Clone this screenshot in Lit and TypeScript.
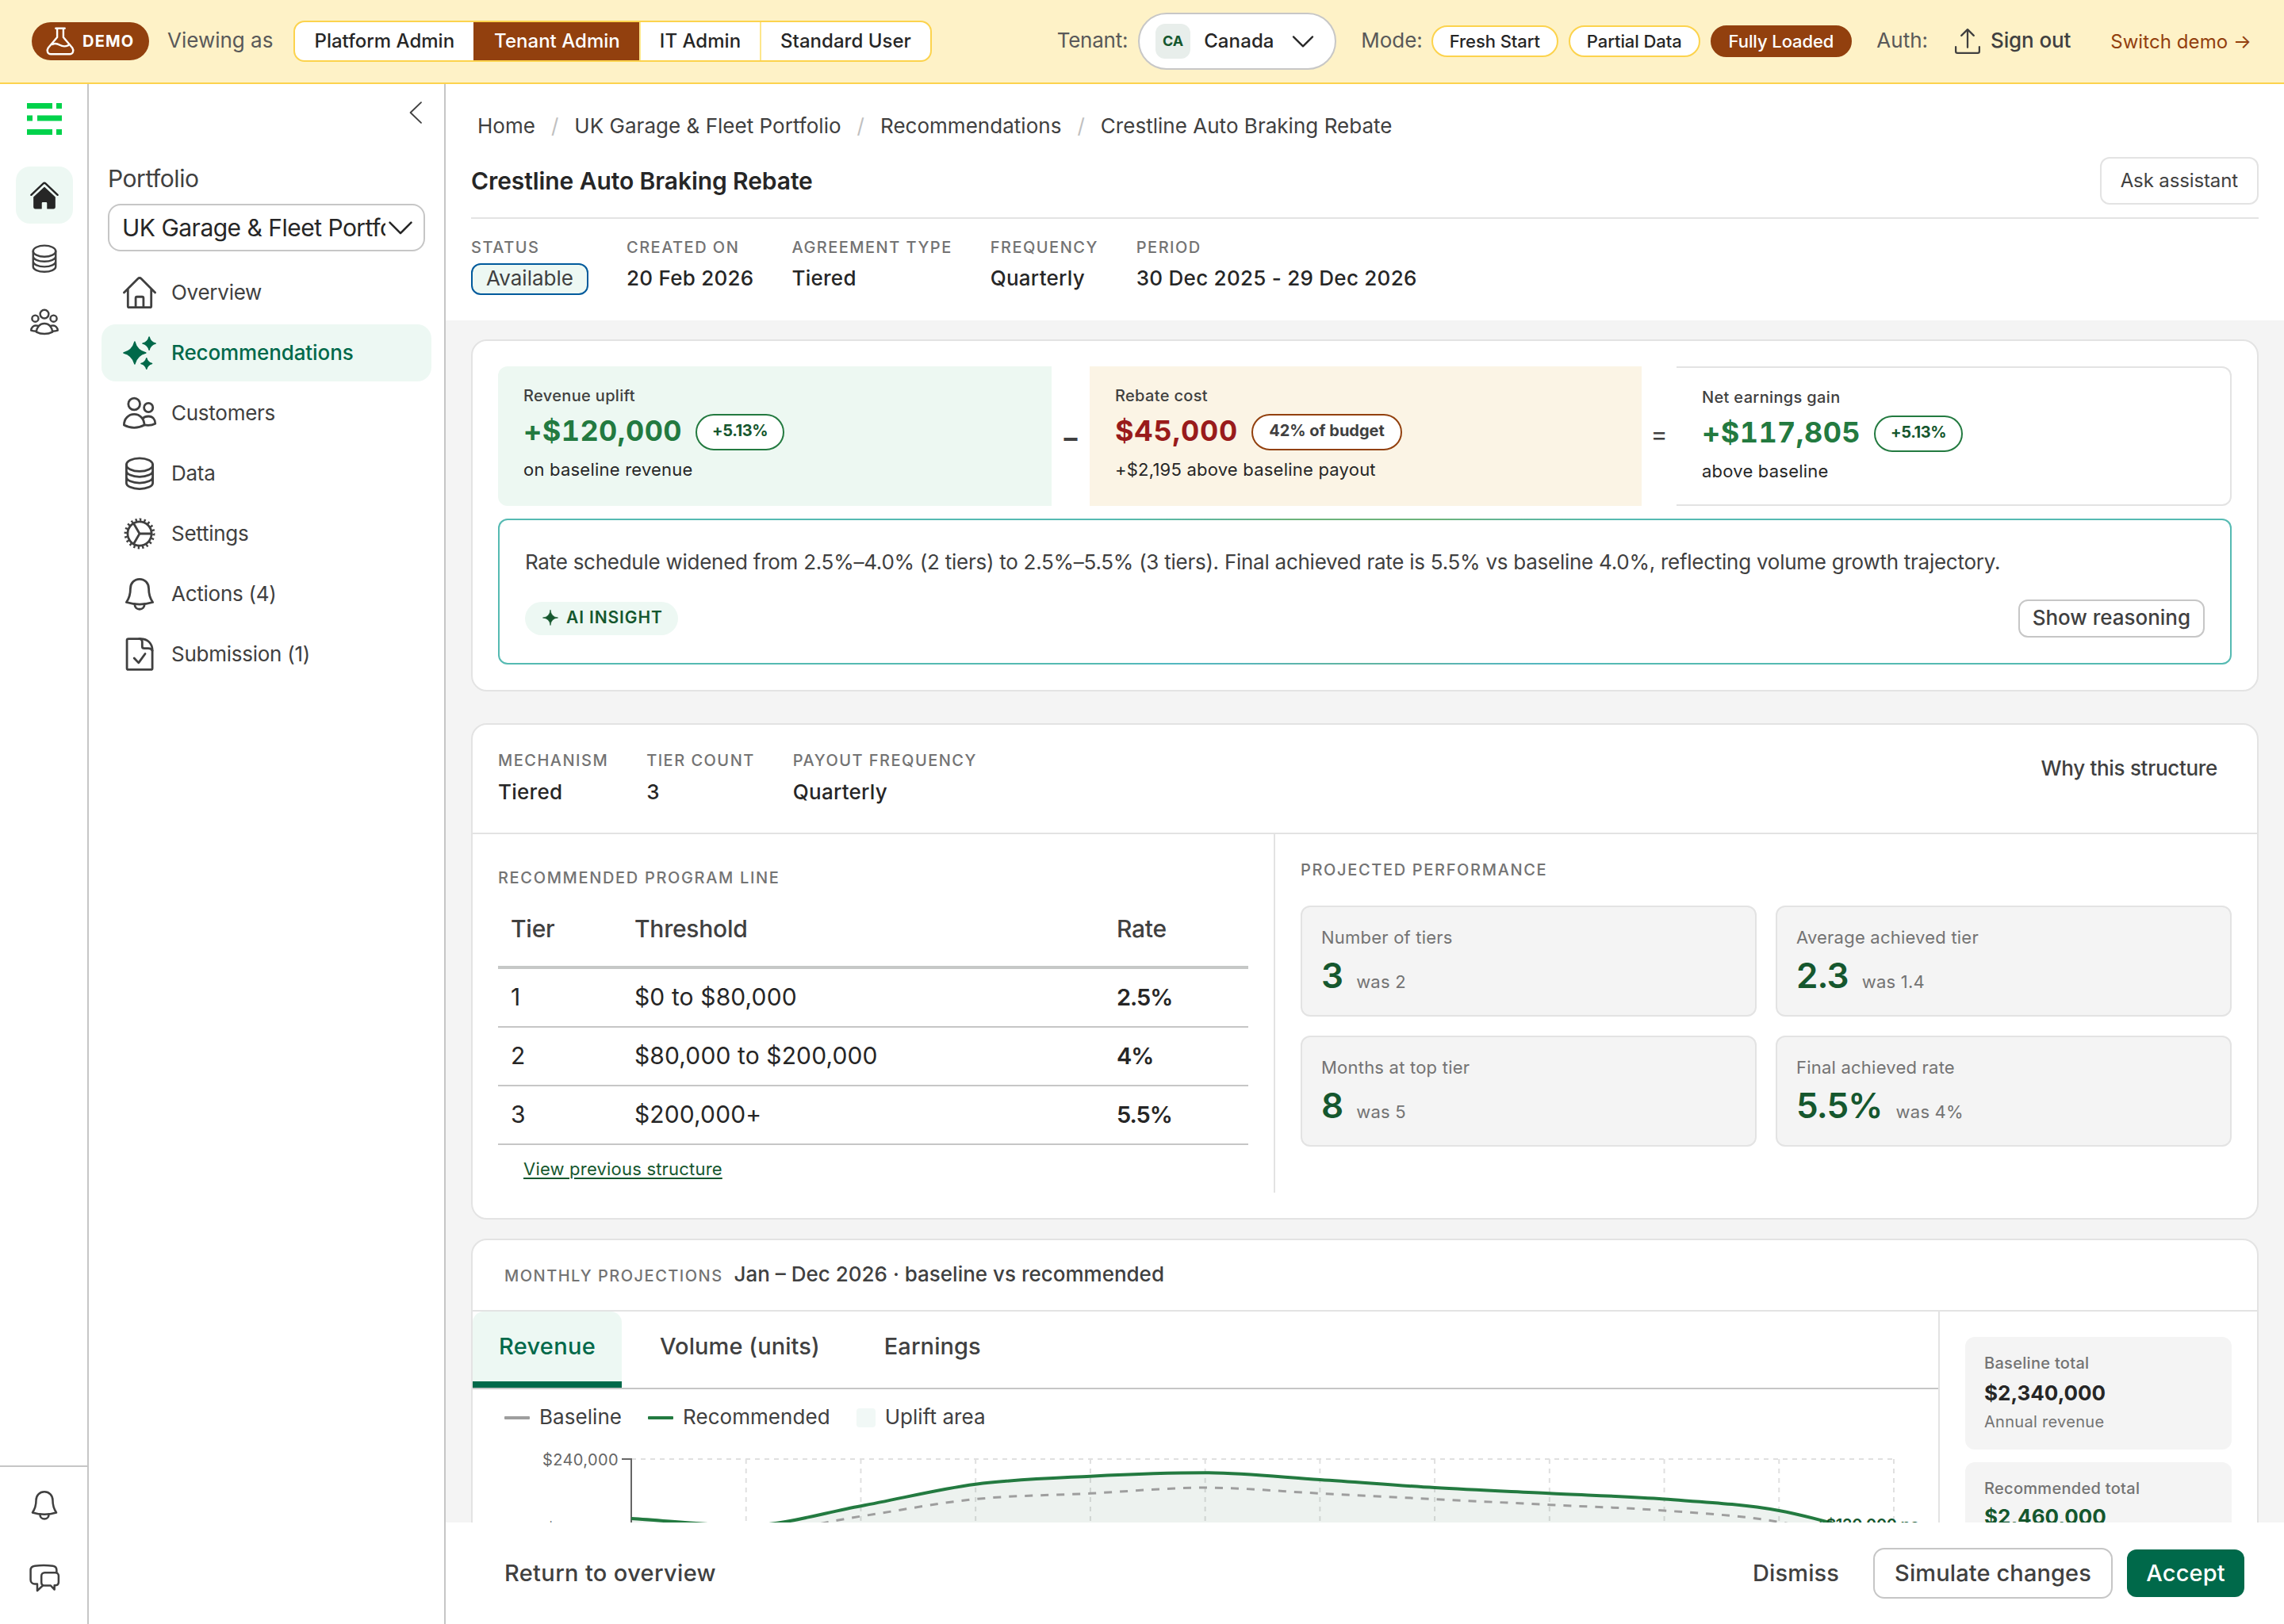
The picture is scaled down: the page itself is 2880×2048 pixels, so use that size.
import {LitElement, html, svg, css} from 'lit';
import {customElement, property, state} from 'lit/decorators.js';
import {classMap} from 'lit/directives/class-map.js';

const star = (cx: number, cy: number, r: number, waist = 0.2) => {
  const k = r * waist;
  return `M${cx} ${cy - r}Q${cx + k} ${cy - k} ${cx + r} ${cy}Q${cx + k} ${cy + k} ${cx} ${cy + r}Q${cx - k} ${cy + k} ${cx - r} ${cy}Q${cx - k} ${cy - k} ${cx} ${cy - r}z`;
};

// All icons are drawn on a 24x24 grid
const icons: Record<string, unknown> = {
  flask: svg`<path d="M8.2 1.2h7.6M9.4 1.4v7.2L1.9 17.5c-1.6 2.4-.6 5.3 2.2 5.3h15.8c2.8 0 3.8-2.9 2.2-5.3L14.6 8.6V1.4"/><path d="M5.4 14.6c2.6-1.4 4.2-.6 6.2.6 2.4 1.4 4.4 1.6 7.2.2"/>`,
  upload: svg`<path d="M12 17.5V1.5M6.5 7 12 1.5 17.5 7M1.5 17v4A1.5 1.5 0 0 0 3 22.5h18a1.5 1.5 0 0 0 1.5-1.5v-4"/>`,
  home: svg`<path d="M.8 12 10.9 1.9a1.5 1.5 0 0 1 2.2 0L23.2 12M3.6 9.5v12.3c0 .4.3.8.8.8h15.2c.5 0 .8-.4.8-.8V9.5"/><path d="M9.2 22.4V16c0-.6.4-1 1-1h3.6c.6 0 1 .4 1 1v6.4"/>`,
  homeSolid: svg`<path d="M.9 11.9 10.9 2.4a1.6 1.6 0 0 1 2.2 0l10 9.5"/><path class="fill" d="M12 5.6 3.2 13.8v8.3c0 .7.5 1.2 1.2 1.2h5v-4.5c0-.7.5-1.2 1.2-1.2h2.8c.7 0 1.2.5 1.2 1.2v4.5h5c.7 0 1.2-.5 1.2-1.2v-8.3z"/>`,
  sparkles: svg`<path class="fill" d="${star(8.5, 12, 8)}${star(18.9, 5.2, 4.7)}${star(17, 19.7, 3.9)}"/>`,
  sparkle: svg`<path class="fill" d="${star(12, 12, 11.5, 0.08)}"/>`,
  people: svg`<circle cx="8.1" cy="5.4" r="4.2"/><circle cx="18.4" cy="8" r="3.2"/><path d="M.8 20.6C.8 16 4 12.8 8.1 12.8s7.3 3.2 7.3 7.8c-4.4 2.5-10.2 2.5-14.6 0z"/><path d="M14.2 15.9c1-1 2.5-1.6 4.2-1.6 3 0 4.9 2.2 4.9 5.3-2.4 1.2-5.2 1.4-7.9.9"/>`,
  group: svg`<circle cx="12" cy="5.4" r="3.6"/><circle cx="4.3" cy="9.1" r="2.7"/><circle cx="19.7" cy="9.1" r="2.7"/><path d="M5.2 20.4c.4-4.4 3.2-7.1 6.8-7.1s6.4 2.7 6.8 7.1c-4 2.1-9.6 2.1-13.6 0z"/><path d="M5.2 19.8c-1.7 0-3.1-.1-4.4-.7.1-2.6 2-4.2 4.3-4.1.9 0 1.5.2 2 .4M18.8 19.8c1.7 0 3.1-.1 4.4-.7-.1-2.6-2-4.2-4.3-4.1-.9 0-1.5.2-2 .4"/>`,
  data: svg`<ellipse cx="12" cy="5.8" rx="9.5" ry="4.7"/><path d="M2.5 5.8v13c0 2.4 4.2 4.4 9.5 4.4s9.5-2 9.5-4.4v-13M2.5 10.1c0 2.4 4.2 4.4 9.5 4.4s9.5-2 9.5-4.4M2.5 14.5c0 2.4 4.2 4.4 9.5 4.4s9.5-2 9.5-4.4"/>`,
  gear: svg`<circle cx="12" cy="12" r="8.6"/><circle class="teeth" cx="12" cy="12" r="10.1" pathLength="20"/><path d="M12 12h8.6M12 12 7.7 4.6M12 12l-4.3 7.4"/>`,
  bell: svg`<path d="M12 1.4c-3.9 0-6.6 2.9-6.6 6.7 0 4.3-.6 6.6-2.9 9.9 5.9 1.8 13.1 1.8 19 0-2.3-3.3-2.9-5.6-2.9-9.9 0-3.8-2.7-6.7-6.6-6.7z"/><path d="M8.5 19.3v.2c0 2 1.5 3.5 3.5 3.5s3.5-1.5 3.5-3.5v-.2"/>`,
  doc: svg`<path d="M4 .9h8.8c5 0 8.4 3.4 8.4 8.3v12.9c0 .6-.5 1-1 1H3.9c-.6 0-1-.4-1-1V1.9c0-.6.4-1 1.1-1z"/><path d="M11.8.9c1.5 0 2.1.9 2.1 2.3v3.2c0 .8.6 1.4 1.4 1.4h2.9c1.6 0 2.6.5 3 1.6M8.1 14.9l3.2 3.3 4.7-6.5"/>`,
  chat: svg`<path d="M21.7 7.5V5.7c0-1.9-1.2-3.2-3-3.4-5-.5-9.6-.5-14.3 0C2.3 2.5 1 3.9 1 5.8v7.6c0 1.9 1.4 3.3 3.3 3.4h2v5.3l4.5-4.2"/><path d="M12.2 7.8h8.6c1.4 0 2.5 1.1 2.5 2.5v5c0 1.4-1 2.4-2.4 2.5H20v3.4l-3-3.2h-4.8c-1.6 0-2.6-1.1-2.6-2.6v-5c0-1.5 1.1-2.6 2.6-2.6z"/>`,
  down: svg`<path d="M3.5 8 12 16.5 20.5 8"/>`,
  left: svg`<path d="M18 1 6.5 12 18 23"/>`,
};

@customElement('ui-icon')
export class UiIcon extends LitElement {
  static styles = css`
    :host {
      display: block;
      flex: none;
      width: 42px;
      height: 42px;
    }

    svg {
      display: block;
      width: 100%;
      height: 100%;
      overflow: visible;
      fill: none;
      stroke: currentColor;
      stroke-width: 1.6;
      stroke-linecap: round;
      stroke-linejoin: round;
    }

    .fill {
      fill: currentColor;
      stroke-width: 0.8;
    }

    .teeth {
      stroke-width: 2;
      stroke-linecap: butt;
      stroke-dasharray: 0.42 0.58;
    }
  `;

  @property() name = 'home';

  render() {
    return html`<svg viewBox="0 0 24 24">${icons[this.name]}</svg>`;
  }
}

const LEFT = 200;
const RIGHT = 1792;
const TOP = 20;
const PX_PER_K = 1.4433;
const MAX = 240;

type Point = [number, number];

// Monotone cubic interpolation, so the line never overshoots its points
function curve(points: Point[]) {
  const n = points.length;
  const slope = (i: number) =>
    (points[i + 1][1] - points[i][1]) / (points[i + 1][0] - points[i][0]);
  const tangents = points.map((_, i) => {
    if (i === 0) return slope(0);
    if (i === n - 1) return slope(n - 2);
    const a = slope(i - 1);
    const b = slope(i);
    if (a * b <= 0) return 0;
    return Math.sign(a) * Math.min(Math.abs(a), Math.abs(b), Math.abs(a + b) / 4) * 2;
  });
  let d = `M${points[0][0]},${points[0][1]}`;
  for (let i = 1; i < n; i++) {
    const [x0, y0] = points[i - 1];
    const [x1, y1] = points[i];
    const h = (x1 - x0) / 3;
    d += `C${x0 + h},${y0 + tangents[i - 1] * h},${x1 - h},${y1 - tangents[i] * h},${x1},${y1}`;
  }
  return d;
}

@customElement('projection-chart')
export class ProjectionChart extends LitElement {
  static styles = css`
    :host {
      display: block;
    }

    svg {
      display: block;
      width: 1848px;
      height: 420px;
    }

    .grid {
      stroke: #e0e0e0;
      stroke-width: 2;
      stroke-dasharray: 6 6;
    }

    .axis {
      stroke: #666;
      stroke-width: 2;
    }

    .tick {
      fill: #666;
      font-size: 20px;
      letter-spacing: 0.02em;
      text-anchor: end;
    }

    .area {
      fill: #15572e;
      opacity: 0.08;
    }

    .recommended,
    .baseline {
      fill: none;
      stroke: #237a40;
      stroke-width: 4;
    }

    .baseline {
      stroke: #9e9e9e;
      stroke-width: 3;
      stroke-dasharray: 10 10;
    }

    .uplift {
      fill: #15572e;
      font-size: 20px;
      font-weight: 600;
      letter-spacing: -0.015em;
      text-anchor: end;
    }
  `;

  @property({type: Array}) baseline: number[] = [];
  @property({type: Array}) recommended: number[] = [];

  private y(value: number) {
    return TOP + (MAX - value) * PX_PER_K;
  }

  private points(values: number[]): Point[] {
    const step = (RIGHT - LEFT) / (values.length - 1);
    return values.map((value, i) => [LEFT + i * step, this.y(value)]);
  }

  render() {
    const recommended = curve(this.points(this.recommended));
    const bottom = this.y(0);
    return html`<svg viewBox="0 0 1848 420">
      ${[240, 180, 120, 60, 0].map(
        (v) => svg`
          <line class="grid" x1=${LEFT} x2=${RIGHT} y1=${this.y(v)} y2=${this.y(v)} />
          <line class="axis" x1=${LEFT - 12} x2=${LEFT} y1=${this.y(v)} y2=${this.y(v)} />
          <text class="tick" x=${LEFT - 16} y=${this.y(v) + 8}>$${v ? `${v},000` : 0}</text>`
      )}
      ${this.points(this.recommended).map(
        ([x]) => svg`<line class="grid" x1=${x} x2=${x} y1=${TOP} y2=${bottom} />`
      )}
      <line class="axis" x1=${LEFT} x2=${LEFT} y1=${TOP - 1} y2=${bottom} />
      <path class="area" d="${recommended}V${bottom}H${LEFT}Z" />
      <path class="baseline" d=${curve(this.points(this.baseline))} />
      <path class="recommended" d=${recommended} />
      <text class="uplift" x="1824" y="109.5">+$120,000 pa</text>
    </svg>`;
  }
}

const roles = ['Platform Admin', 'Tenant Admin', 'IT Admin', 'Standard User'];
const modes = ['Fresh Start', 'Partial Data', 'Fully Loaded'];
const crumbs = ['Home', 'UK Garage & Fleet Portfolio', 'Recommendations', 'Crestline Auto Braking Rebate'];
const nav = [
  {icon: 'home', label: 'Overview'},
  {icon: 'sparkles', label: 'Recommendations'},
  {icon: 'people', label: 'Customers'},
  {icon: 'data', label: 'Data'},
  {icon: 'gear', label: 'Settings'},
  {icon: 'bell', label: 'Actions (4)'},
  {icon: 'doc', label: 'Submission (1)'},
];
const meta = [
  ['Created on', '20 Feb 2026'],
  ['Agreement type', 'Tiered'],
  ['Frequency', 'Quarterly'],
  ['Period', '30 Dec 2025 - 29 Dec 2026'],
];
const structure = [
  ['Mechanism', 'Tiered'],
  ['Tier count', '3'],
  ['Payout frequency', 'Quarterly'],
];
const tiers = [
  ['1', '$0 to $80,000', '2.5%'],
  ['2', '$80,000 to $200,000', '4%'],
  ['3', '$200,000+', '5.5%'],
];
const performance = [
  ['Number of tiers', '3', 'was 2'],
  ['Average achieved tier', '2.3', 'was 1.4'],
  ['Months at top tier', '8', 'was 5'],
  ['Final achieved rate', '5.5%', 'was 4%'],
];
const tabs = ['Revenue', 'Volume (units)', 'Earnings'];
const baseline = [180, 175, 190, 205, 210, 215, 210, 205, 200, 195, 185, 160];
const recommended = [188, 182, 199, 218, 225, 228, 222, 215, 210, 205, 195, 169];

@customElement('app-root')
export class AppRoot extends LitElement {
  static styles = css`
    :host {
      display: block;
      width: 2880px;
      height: 2048px;
      overflow: hidden;
      background: #fff;
      color: #404040;
      font: 400 26px/32px Inter, sans-serif;
    }

    * {
      box-sizing: border-box;
    }

    .topbar {
      display: flex;
      align-items: center;
      height: 106px;
      padding: 0 41px 0 40px;
      background: #fef2c7;
      border-bottom: 2px solid #fcd34d;
      white-space: nowrap;
    }

    .hint {
      padding-bottom: 2px;
      color: #595959;
    }

    .demo {
      display: flex;
      align-items: center;
      gap: 10px;
      width: 148px;
      height: 48px;
      margin-right: 23px;
      padding-left: 18px;
      border-radius: 24px;
      background: #92400e;
      color: #fff;
      font-size: 20px;
      font-weight: 700;
      letter-spacing: 0.06em;
    }

    .demo ui-icon {
      width: 36px;
      height: 36px;
    }

    .roles {
      display: flex;
      height: 52px;
      margin-left: 26px;
      border: 2px solid #fcd34d;
      border-radius: 14px;
      overflow: hidden;
      background: #fff;
      color: #262626;
      font-size: 24px;
      font-weight: 500;
      line-height: 48px;
      letter-spacing: 0.001em;
    }

    .role {
      padding: 0 24px;
    }

    .role + .role {
      border-left: 2px solid #fde68a;
    }

    .role.on {
      border-color: #92400e;
      background: #92400e;
      color: #fff;
    }

    .tenant-label {
      margin-left: auto;
      margin-right: 13px;
      letter-spacing: -0.01em;
    }

    .tenant {
      display: flex;
      align-items: center;
      width: 250px;
      height: 72px;
      margin-right: 31px;
      padding: 0 26px 0 20px;
      border: 2px solid #c7c7c7;
      border-radius: 36px;
      background: #fff;
      color: #262626;
      font-size: 24px;
      font-weight: 500;
      letter-spacing: 0.005em;
    }

    .tenant ui-icon {
      width: 34px;
      height: 34px;
      margin-left: auto;
      margin-right: -3px;
    }

    .code {
      width: 44px;
      height: 44px;
      margin-right: 17px;
      border-radius: 12px;
      background: #e8eeeb;
      color: #15572e;
      font-size: 18px;
      font-weight: 700;
      line-height: 43px;
      text-align: center;
    }

    .modes {
      display: flex;
      gap: 13px;
      margin: 0 31px 0 11px;
    }

    .mode {
      height: 40px;
      padding: 0 21px;
      border: 2px solid #fcd34d;
      border-radius: 20px;
      background: #fff;
      color: #262626;
      font-size: 22px;
      font-weight: 500;
      line-height: 37px;
      letter-spacing: -0.004em;
    }

    .mode.on {
      border-color: #92400e;
      background: #92400e;
      color: #fff;
    }

    .signout {
      display: flex;
      align-items: center;
      gap: 12px;
      margin: 0 50px 0 33px;
      font-weight: 500;
      letter-spacing: -0.005em;
    }

    .signout span {
      padding-bottom: 2px;
    }

    .signout ui-icon {
      width: 34px;
      height: 34px;
    }

    .switch {
      color: #92400e;
      font-size: 24px;
      letter-spacing: 0.003em;
      padding-top: 2px;
    }

    .shell {
      display: flex;
      height: 1942px;
    }

    .rail {
      display: flex;
      flex-direction: column;
      align-items: center;
      width: 112px;
      padding: 24px 0 0 2px;
      border-right: 2px solid #c6c6c6;
    }

    .logo {
      width: 44px;
      height: 40px;
      margin-bottom: 40px;
      fill: #00d24b;
    }

    .rail-button {
      display: grid;
      place-items: center;
      width: 72px;
      height: 72px;
      margin-bottom: 8px;
      border-radius: 18px;
    }

    .rail-button.on {
      background: #edf8f3;
      color: #262626;
    }

    .rail-button ui-icon {
      width: 36px;
      height: 36px;
    }

    .rail-bottom {
      display: flex;
      flex-direction: column;
      align-items: center;
      gap: 12px;
      width: 110px;
      height: 200px;
      margin: auto 0 0 -2px;
      padding: 12px 0 0 2px;
      border-top: 2px solid #c6c6c6;
    }

    .rail-bottom ui-icon {
      width: 38px;
      height: 38px;
    }

    .sidebar {
      width: 450px;
      padding: 22px 16px 0;
      border-right: 2px solid #c6c6c6;
    }

    .collapse {
      display: flex;
      justify-content: flex-end;
      margin: 0 6px 50px 0;
    }

    .collapse ui-icon {
      width: 28px;
      height: 28px;
    }

    .field-label {
      margin: 0 8px 12px;
      font-size: 30px;
      line-height: 39px;
      letter-spacing: -0.015em;
    }

    .select {
      display: flex;
      align-items: center;
      height: 60px;
      margin: 0 8px 16px;
      padding: 0 10px 0 16px;
      border: 2px solid #c6c6c6;
      border-radius: 16px;
      color: #262626;
      font-size: 30px;
      line-height: 50px;
      letter-spacing: -0.017em;
    }

    .select span {
      flex: 1;
      overflow: hidden;
      white-space: nowrap;
    }

    .select ui-icon {
      width: 38px;
      height: 38px;
    }

    .nav {
      display: grid;
      gap: 4px;
    }

    .nav-item {
      display: flex;
      align-items: center;
      gap: 19px;
      height: 72px;
      padding-left: 27px;
      border-radius: 18px;
      letter-spacing: -0.01em;
    }

    .nav-item.on {
      background: #edf8f3;
      color: #00694a;
      font-weight: 500;
      letter-spacing: -0.004em;
    }

    .main {
      display: flex;
      flex-direction: column;
      flex: 1;
      min-width: 0;
    }

    .header {
      height: 298px;
      padding: 37px 32px 0;
    }

    .crumbs {
      display: flex;
      margin-left: 8px;
      line-height: 32px;
      letter-spacing: 0.001em;
    }

    .crumb + .crumb::before {
      content: '/';
      margin: 0 20px;
      color: #c0c0c0;
    }

    .title-row {
      display: flex;
      align-items: center;
      justify-content: space-between;
      margin-top: 23px;
      padding-bottom: 16px;
      border-bottom: 2px solid #e3e3e3;
    }

    .title {
      margin: 0;
      padding-bottom: 1px;
      color: #262626;
      font-size: 30px;
      font-weight: 600;
      line-height: 40px;
      letter-spacing: -0.003em;
    }

    .ask {
      height: 60px;
      padding: 0 24px;
      border: 2px solid #e3e3e3;
      border-radius: 12px;
      font-size: 24px;
      line-height: 55px;
      letter-spacing: -0.005em;
    }

    .facts {
      display: flex;
      gap: 48px;
    }

    .header .facts {
      margin-top: 24px;
    }

    .caption {
      color: #737373;
      font-size: 20px;
      font-weight: 500;
      line-height: 25px;
      letter-spacing: 0.074em;
      text-transform: uppercase;
      white-space: nowrap;
    }

    .caption.heading {
      letter-spacing: 0.083em;
    }

    .fact {
      margin-top: 7px;
      color: #262626;
      font-weight: 500;
      line-height: 38px;
      letter-spacing: 0.01em;
    }

    .status {
      width: 148px;
      height: 40px;
      margin-top: 7px;
      border: 2px solid #005a9c;
      border-radius: 12px;
      background: #edf8f3;
      color: #404040;
      line-height: 34px;
      text-align: center;
    }

    .content {
      flex: 1;
      min-height: 0;
      overflow: hidden;
      padding: 24px 32px 0;
      background: #f4f4f4;
    }

    .card {
      margin-bottom: 24px;
      border: 2px solid #e3e3e3;
      border-radius: 20px;
      background: #fff;
      overflow: hidden;
    }

    .summary {
      height: 444px;
      margin-bottom: 40px;
      padding: 32px;
    }

    .equation {
      display: grid;
      grid-template-columns: 698fr 48px 696fr 44px 700fr;
      height: 176px;
      margin-bottom: 16px;
    }

    .operator {
      align-self: center;
      padding-bottom: 5px;
      font-size: 32px;
      font-weight: 400;
      text-align: center;
    }

    .operator.minus {
      padding: 3px 0 0;
      font-size: 34px;
      font-weight: 700;
    }

    .metric {
      padding: 23px 32px;
    }

    .metric.gain {
      border-radius: 12px 0 0 12px;
      background: #edf8f2;
    }

    .metric.cost {
      background: #fbf4e5;
    }

    .metric.net {
      border: 2px solid #e3e3e3;
      border-left: none;
      border-radius: 0 12px 12px 0;
    }

    .metric-label {
      font-size: 20px;
      font-weight: 500;
      line-height: 28px;
      letter-spacing: 0.017em;
    }

    .metric-row {
      display: flex;
      align-items: center;
      gap: 17px;
      height: 46px;
      margin: 9px 0 10px;
    }

    .amount {
      padding-bottom: 4px;
      color: #237a40;
      font-size: 36px;
      font-weight: 700;
      font-variant-numeric: tabular-nums;
      line-height: 42px;
      letter-spacing: 0.012em;
    }

    .cost .amount {
      color: #991b1b;
      letter-spacing: 0.022em;
    }

    .chip {
      height: 46px;
      padding: 0 19px;
      border: 2px solid #237a40;
      border-radius: 23px;
      background: #fff;
      color: #15572e;
      font-size: 20px;
      font-weight: 700;
      line-height: 39px;
      letter-spacing: -0.02em;
    }

    .cost .chip {
      padding: 0 20px;
      border-color: #92400e;
      color: #404040;
      letter-spacing: 0;
    }

    .metric-note {
      color: #262626;
      font-size: 22px;
      line-height: 28px;
      letter-spacing: 0.01em;
    }

    .insight {
      height: 184px;
      padding: 33px 32px 0;
      border: 2px solid transparent;
      border-radius: 12px;
      background: linear-gradient(#fff, #fff) padding-box,
        radial-gradient(circle 320px at 50% 0, #6cb37c 30%, transparent) border-box,
        radial-gradient(circle 320px at 50% 100%, #4bb7e2 40%, transparent) border-box,
        #55bab2 border-box;
    }

    .insight-text {
      margin: 0;
      line-height: 40px;
      letter-spacing: -0.01em;
      white-space: nowrap;
    }

    .insight-row {
      display: flex;
      align-items: center;
      justify-content: space-between;
      margin-top: 27px;
    }

    .ai {
      display: flex;
      align-items: center;
      gap: 10px;
      height: 42px;
      padding: 0 19px 3px 22px;
      border-radius: 21px;
      background: #edf8f3;
      color: #15572e;
      font-size: 21px;
      font-weight: 600;
      letter-spacing: 0.042em;
    }

    .ai ui-icon {
      width: 20px;
      height: 20px;
    }

    .reasoning {
      height: 48px;
      padding: 0 16px;
      border: 2px solid #c6c6c6;
      border-radius: 12px;
      font-weight: 500;
      line-height: 42px;
      letter-spacing: -0.001em;
    }

    .structure {
      height: 626px;
    }

    .structure-head {
      display: flex;
      justify-content: space-between;
      height: 138px;
      padding: 33px 50px 0 32px;
      border-bottom: 2px solid #e3e3e3;
    }

    .structure-head .fact {
      line-height: 40px;
    }

    .why {
      font-weight: 500;
      line-height: 43px;
      letter-spacing: -0.012em;
    }

    .structure-body {
      display: flex;
      height: 452px;
    }

    .program {
      width: 1012px;
      padding: 43px 32px 0;
      border-right: 2px solid #e3e3e3;
    }

    .tier {
      display: grid;
      grid-template-columns: 156px 608px 1fr;
      height: 74px;
      padding-left: 16px;
      border-bottom: 2px solid #c6c6c6;
      color: #262626;
      font-size: 30px;
      line-height: 71px;
      letter-spacing: 0.004em;
    }

    .tier.head {
      height: 98px;
      margin-top: 4px;
      border-bottom: 4px solid #c6c8c7;
      color: #404040;
      font-weight: 500;
      line-height: 94px;
      letter-spacing: -0.008em;
    }

    .rate {
      font-size: 29px;
      font-weight: 600;
      letter-spacing: -0.035em;
    }

    .head .rate {
      font: inherit;
      letter-spacing: inherit;
    }

    .previous {
      display: inline-block;
      margin: 16px 32px 0;
      color: #15572e;
      font-size: 22px;
      line-height: 28px;
      letter-spacing: 0.009em;
      text-decoration: underline;
      text-underline-offset: 3px;
    }

    .performance {
      flex: 1;
      padding: 33px 32px 0;
    }

    .stats {
      display: grid;
      grid-template-columns: 1fr 1fr;
      gap: 24px;
      margin-top: 32px;
    }

    .stat {
      height: 140px;
      padding: 24px 24px 0;
      border: 2px solid #e3e3e3;
      border-radius: 12px;
      background: #f4f4f4;
      color: #737373;
      font-size: 22px;
      letter-spacing: 0.01em;
    }

    .stat-label {
      line-height: 28px;
    }

    .stat-row {
      display: flex;
      align-items: baseline;
      gap: 17px;
      margin-top: 10px;
      line-height: 48px;
    }

    .stat-value {
      color: #15572e;
      font-size: 44px;
      font-weight: 600;
      letter-spacing: -0.02em;
    }

    .projection-head {
      display: flex;
      align-items: baseline;
      gap: 14px;
      height: 90px;
      padding: 27px 40px 0;
      border-bottom: 2px solid #e3e3e3;
      font-weight: 500;
    }

    .projection-body {
      display: flex;
    }

    .chart-column {
      width: 1850px;
      border-right: 2px solid #e3e3e3;
    }

    .tabs {
      display: flex;
      gap: 15px;
      height: 98px;
      border-bottom: 2px solid #c6c6c6;
      font-size: 29px;
      font-weight: 500;
      line-height: 87px;
      letter-spacing: 0.003em;
    }

    .tab {
      padding: 0 33px;
    }

    .tab.on {
      border-bottom: 8px solid #00694a;
      border-radius: 14px 14px 0 0;
      background: #edf8f3;
      color: #00694a;
      letter-spacing: 0.01em;
    }

    .legend {
      display: flex;
      gap: 33px;
      height: 68px;
      padding: 20px 40px 0;
    }

    .key {
      display: flex;
      align-items: center;
      gap: 12px;
      height: 32px;
    }

    .key span {
      padding-bottom: 2px;
      letter-spacing: 0.002em;
    }

    .line {
      width: 32px;
      height: 4px;
      border-radius: 1px;
      background: #9e9e9e;
    }

    .line.green {
      background: #237a40;
    }

    .swatch {
      width: 24px;
      height: 24px;
      border-radius: 4px;
      background: #f1f8f6;
    }

    .totals {
      flex: 1;
      padding: 32px;
    }

    .total {
      height: 142px;
      margin-bottom: 16px;
      padding: 21px 24px 0;
      border-radius: 12px;
      background: #f4f4f4;
      color: #737373;
      font-size: 20px;
      line-height: 24px;
      letter-spacing: 0.015em;
    }

    .total-label {
      font-weight: 500;
    }

    .total-value {
      margin: 10px 0 8px;
      color: #262626;
      font-size: 26px;
      font-weight: 700;
      line-height: 32px;
      letter-spacing: 0;
    }

    .total-value.green {
      margin-top: 8px;
      color: #15572e;
    }

    .footer {
      display: flex;
      align-items: center;
      height: 128px;
      padding: 0 50px 0 74px;
      font-size: 29px;
      font-weight: 500;
      letter-spacing: 0.004em;
    }

    .return {
      letter-spacing: 0.012em;
    }

    .dismiss {
      margin: 0 43px 0 auto;
    }

    .simulate {
      height: 64px;
      margin-right: 18px;
      padding: 0 25px;
      border: 2px solid #c6c6c6;
      border-radius: 14px;
      line-height: 59px;
    }

    .accept {
      width: 148px;
      height: 60px;
      border-radius: 12px;
      background: #00694a;
      color: #fff;
      line-height: 59px;
      text-align: center;
    }
  `;

  @state() private role = 'Tenant Admin';
  @state() private mode = 'Fully Loaded';
  @state() private tab = 'Revenue';

  renderTopbar() {
    return html`<div class="topbar">
      <div class="demo"><ui-icon name="flask"></ui-icon>DEMO</div>
      <span class="hint">Viewing as</span>
      <div class="roles">
        ${roles.map(
          (r) => html`<div
            class=${classMap({role: true, on: r === this.role})}
            @click=${() => (this.role = r)}
          >${r}</div>`
        )}
      </div>
      <span class="hint tenant-label">Tenant:</span>
      <div class="tenant">
        <span class="code">CA</span>Canada<ui-icon name="down"></ui-icon>
      </div>
      <span class="hint">Mode:</span>
      <div class="modes">
        ${modes.map(
          (m) => html`<div
            class=${classMap({mode: true, on: m === this.mode})}
            @click=${() => (this.mode = m)}
          >${m}</div>`
        )}
      </div>
      <span class="hint">Auth:</span>
      <div class="signout"><ui-icon name="upload"></ui-icon><span>Sign out</span></div>
      <span class="switch">Switch demo →</span>
    </div>`;
  }

  renderRail() {
    return html`<div class="rail">
      <svg class="logo" viewBox="0 0 44 40">
        <path d="M0 0h32v7H0zM37 0h7v7h-7zM0 15.5h7v7H0zM13 15.5h31v7H13zM0 33h32v7H0zM37 33h7v7h-7z" />
      </svg>
      <div class="rail-button on"><ui-icon name="homeSolid"></ui-icon></div>
      <div class="rail-button"><ui-icon name="data"></ui-icon></div>
      <div class="rail-button"><ui-icon name="group"></ui-icon></div>
      <div class="rail-bottom">
        <div class="rail-button"><ui-icon name="bell"></ui-icon></div>
        <div class="rail-button"><ui-icon name="chat"></ui-icon></div>
      </div>
    </div>`;
  }

  renderSidebar() {
    return html`<div class="sidebar">
      <div class="collapse"><ui-icon name="left"></ui-icon></div>
      <div class="field-label">Portfolio</div>
      <div class="select">
        <span>UK Garage & Fleet Portfolio</span>
        <ui-icon name="down"></ui-icon>
      </div>
      <div class="nav">
        ${nav.map(
          ({icon, label}) => html`<div
            class=${classMap({'nav-item': true, on: label === 'Recommendations'})}
          ><ui-icon name=${icon}></ui-icon>${label}</div>`
        )}
      </div>
    </div>`;
  }

  renderFacts(facts: string[][]) {
    return facts.map(
      ([label, value]) => html`<div>
        <div class="caption">${label}</div>
        <div class="fact">${value}</div>
      </div>`
    );
  }

  renderMetric(kind: string, label: string, amount: string, chip: string, note: string) {
    return html`<div class="metric ${kind}">
      <div class="metric-label">${label}</div>
      <div class="metric-row">
        <span class="amount">${amount}</span><span class="chip">${chip}</span>
      </div>
      <div class="metric-note">${note}</div>
    </div>`;
  }

  renderSummary() {
    return html`<div class="card summary">
      <div class="equation">
        ${this.renderMetric('gain', 'Revenue uplift', '+$120,000', '+5.13%', 'on baseline revenue')}
        <div class="operator minus">–</div>
        ${this.renderMetric('cost', 'Rebate cost', '$45,000', '42% of budget', '+$2,195 above baseline payout')}
        <div class="operator">=</div>
        ${this.renderMetric('net', 'Net earnings gain', '+$117,805', '+5.13%', 'above baseline')}
      </div>
      <div class="insight">
        <p class="insight-text">Rate schedule widened from 2.5%–4.0% (2 tiers) to 2.5%–5.5% (3 tiers). Final achieved rate is 5.5% vs baseline 4.0%, reflecting volume growth trajectory.</p>
        <div class="insight-row">
          <div class="ai"><ui-icon name="sparkle"></ui-icon>AI INSIGHT</div>
          <div class="reasoning">Show reasoning</div>
        </div>
      </div>
    </div>`;
  }

  renderStructure() {
    return html`<div class="card structure">
      <div class="structure-head">
        <div class="facts">${this.renderFacts(structure)}</div>
        <div class="why">Why this structure</div>
      </div>
      <div class="structure-body">
        <div class="program">
          <div class="caption heading">Recommended program line</div>
          <div class="tier head"><span>Tier</span><span>Threshold</span><span>Rate</span></div>
          ${tiers.map(
            ([tier, threshold, rate]) => html`<div class="tier">
              <span>${tier}</span><span>${threshold}</span><span class="rate">${rate}</span>
            </div>`
          )}
          <a class="previous">View previous structure</a>
        </div>
        <div class="performance">
          <div class="caption heading">Projected performance</div>
          <div class="stats">
            ${performance.map(
              ([label, value, was]) => html`<div class="stat">
                <div class="stat-label">${label}</div>
                <div class="stat-row"><span class="stat-value">${value}</span><span>${was}</span></div>
              </div>`
            )}
          </div>
        </div>
      </div>
    </div>`;
  }

  renderProjections() {
    return html`<div class="card">
      <div class="projection-head">
        <span class="caption">Monthly projections</span>
        <span>Jan – Dec 2026 · baseline vs recommended</span>
      </div>
      <div class="projection-body">
        <div class="chart-column">
          <div class="tabs">
            ${tabs.map(
              (t) => html`<div
                class=${classMap({tab: true, on: t === this.tab})}
                @click=${() => (this.tab = t)}
              >${t}</div>`
            )}
          </div>
          <div class="legend">
            <div class="key"><i class="line"></i><span>Baseline</span></div>
            <div class="key"><i class="line green"></i><span>Recommended</span></div>
            <div class="key"><i class="swatch"></i><span>Uplift area</span></div>
          </div>
          <projection-chart .baseline=${baseline} .recommended=${recommended}></projection-chart>
        </div>
        <div class="totals">
          <div class="total">
            <div class="total-label">Baseline total</div>
            <div class="total-value">$2,340,000</div>
            <div>Annual revenue</div>
          </div>
          <div class="total">
            <div class="total-label">Recommended total</div>
            <div class="total-value green">$2,460,000</div>
            <div>Annual revenue</div>
          </div>
        </div>
      </div>
    </div>`;
  }

  render() {
    return html`
      ${this.renderTopbar()}
      <div class="shell">
        ${this.renderRail()} ${this.renderSidebar()}
        <div class="main">
          <div class="header">
            <div class="crumbs">
              ${crumbs.map((c) => html`<span class="crumb">${c}</span>`)}
            </div>
            <div class="title-row">
              <h1 class="title">Crestline Auto Braking Rebate</h1>
              <div class="ask">Ask assistant</div>
            </div>
            <div class="facts">
              <div>
                <div class="caption">Status</div>
                <div class="status">Available</div>
              </div>
              ${this.renderFacts(meta)}
            </div>
          </div>
          <div class="content">
            ${this.renderSummary()} ${this.renderStructure()} ${this.renderProjections()}
          </div>
          <div class="footer">
            <span class="return">Return to overview</span>
            <span class="dismiss">Dismiss</span>
            <div class="simulate">Simulate changes</div>
            <div class="accept">Accept</div>
          </div>
        </div>
      </div>
    `;
  }
}
